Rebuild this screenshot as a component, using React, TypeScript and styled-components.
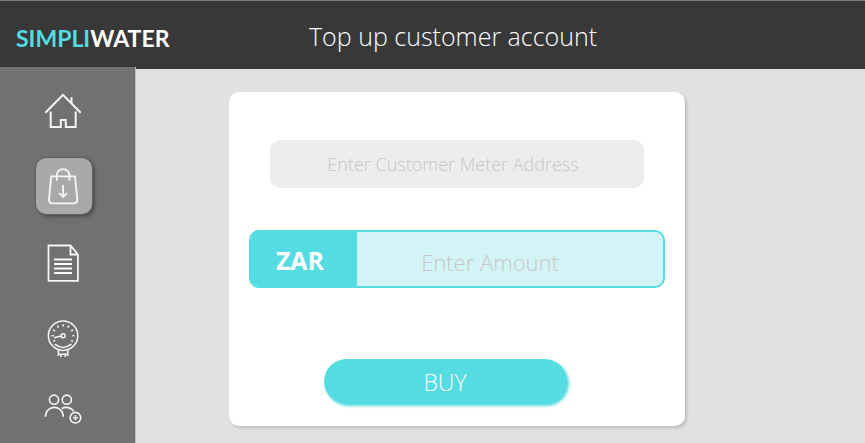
import React from "react";
import styled, { createGlobalStyle } from "styled-components";

const aqua = "#55dbe2";

const GlobalStyle = createGlobalStyle`
  *, *::before, *::after { box-sizing: border-box; }
  body {
    margin: 0;
    background: #e1e1e1;
    font-family: "Open Sans", "Noto Sans", sans-serif;
  }
`;

const Page = styled.div`
  display: flex;
  flex-direction: column;
  min-height: 100vh;
`;

const Header = styled.header`
  display: grid;
  grid-template-columns: 293px 1fr;
  align-items: center;
  height: 69px;
  padding: 2px 16px 0;
  border-top: 1px solid #7d8080;
  background: #383838;
  color: #fff;
`;

const Brand = styled.a`
  padding-top: 4px;
  color: #fff;
  font: 700 23px/32px Lato, sans-serif;
  text-decoration: none;

  span { color: ${aqua}; }
`;

const Title = styled.h1`
  margin: 0;
  font-size: 25px;
  line-height: 36px;
  font-weight: 300;
  white-space: nowrap;
`;

const Body = styled.div`
  display: flex;
  flex: 1;
`;

const Sidebar = styled.nav`
  display: flex;
  flex-direction: column;
  flex: none;
  gap: 19px;
  width: 136px;
  margin-top: -2px;
  padding: 16px 0 4px 36px;
  border-right: 1px solid #bdbdbd;
  background: #717171;
`;

const NavLink = styled.a<{ $active?: boolean }>`
  display: block;
  width: 56px;
  height: 56px;
  border-radius: 10px;
  color: #f6f6f6;
  background: ${(p) => (p.$active ? "#a9a9a9" : "transparent")};
  box-shadow: ${(p) => (p.$active ? "0 0 0 1px #5f5f5f, 2px 2px 4px rgba(0, 0, 0, 0.45)" : "none")};
`;

const Icon = styled.svg`
  display: block;
  fill: none;
  stroke: currentColor;
  stroke-width: 2;
`;

const Main = styled.main`
  flex: 1;
  padding: 23px 93px 16px;
`;

const Card = styled.form`
  display: flex;
  flex-direction: column;
  align-items: center;
  max-width: 456px;
  padding: 48px 20px 22px;
  border-radius: 10px;
  background: #fff;
  box-shadow: 2px 2px 3px rgba(0, 0, 0, 0.16);
`;

const TextInput = styled.input`
  min-width: 0;
  border: 0;
  font: 300 22px "Open Sans", sans-serif;
  text-align: center;
  color: #555;

  &::placeholder { color: #c6c6c6; opacity: 1; }
`;

const MeterInput = styled(TextInput)`
  width: 90%;
  height: 48px;
  padding: 0 8px 0 0;
  border-radius: 10px;
  background: #ededed;
  font-size: 18px;
`;

const AmountField = styled.div`
  display: flex;
  width: 100%;
  height: 58px;
  margin: 42px 0 71px;
  border: 2px solid ${aqua};
  border-radius: 10px;
  background: #d3f4f7;
  overflow: hidden;
`;

const Currency = styled.label`
  flex: none;
  width: 106px;
  padding-right: 8px;
  background: ${aqua};
  color: #fff;
  font-size: 25px;
  font-weight: 700;
  line-height: 56px;
  text-align: center;
`;

const AmountInput = styled(TextInput)`
  flex: 1;
  padding: 6px 40px 0 0;
  background: transparent;
`;

const BuyButton = styled.button`
  width: 243px;
  height: 45px;
  margin-right: 24px;
  padding: 0;
  border: 0;
  border-radius: 23px;
  background: ${aqua};
  box-shadow: 2px 2px 3px ${aqua};
  color: #fff;
  font: 300 23px/44px "Open Sans", sans-serif;
  cursor: pointer;
`;

const NavIcon = ({ children }: { children: React.ReactNode }) => (
  <Icon width="56" height="56" viewBox="0 0 56 56" aria-hidden="true">
    {children}
  </Icon>
);

const HomeIcon = () => (
  <NavIcon>
    <path d="M9.4 29.7 27 11.8 44.7 29.7M35.5 20V14.2M14.7 28.5V44H24.8V37H29.8V44H39.7V28.5" />
  </NavIcon>
);

const BagIcon = () => (
  <NavIcon>
    <path strokeWidth="1.8" d="M15.2 18.4H39L41.3 41.5Q41.4 45.3 37.8 45.3H16.5Q12.9 45.3 13 41.5ZM20.8 22.8V17.4A6.3 6.3 0 0 1 33.4 17.4V22.8M27.1 27V38.7M23.2 35.2 27.1 38.9 31 35.2" />
  </NavIcon>
);

const DocumentIcon = () => (
  <NavIcon>
    <path strokeWidth="1.8" d="M12.5 12.5H34.5L41.9 21.5V47.8H12.5ZM34.5 12.5V21.5H41.9M18 26.5H36M18 31H36M18 35.5H36M18 40H36" />
  </NavIcon>
);

const tickAngles = [-120, -90, -60, -30, 0, 30, 60, 90, 120];

const MeterIcon = () => (
  <NavIcon>
    <g strokeWidth="1.5">
      <circle cx="27.1" cy="27.7" r="14.7" />
      <circle cx="27.1" cy="27.7" r="2" />
      <path d="M25 28.1 18 29.7M18.8 36.2Q27.1 42.6 35.4 36.2M22.4 42V46.3H31.8V42M25 46.3V49M29.2 46.3V49M22.4 46.3V48M31.8 46.3V48" />
      {tickAngles.map((angle) => (
        <path key={angle} d="M27.1 16.2V18.4" transform={`rotate(${angle} 27.1 27.7)`} />
      ))}
    </g>
  </NavIcon>
);

const AddUsersIcon = () => (
  <NavIcon>
    <g strokeWidth="1.6">
      <circle cx="18" cy="16.7" r="4.6" />
      <circle cx="30.8" cy="16.7" r="4.6" />
      <path d="M9.5 33.8C9.5 21.2 27.2 21.2 27.2 33.8M25.8 25.5Q32.5 22.4 37.8 28.2" />
      <circle cx="39.4" cy="34.7" r="5.3" />
      <path d="M36.9 34.7H41.9M39.4 32.2V37.2" />
    </g>
  </NavIcon>
);

const navItems = [
  { label: "Home", href: "#home", Glyph: HomeIcon },
  { label: "Top up", href: "#top-up", Glyph: BagIcon, active: true },
  { label: "Reports", href: "#reports", Glyph: DocumentIcon },
  { label: "Meters", href: "#meters", Glyph: MeterIcon },
  { label: "Add customers", href: "#customers", Glyph: AddUsersIcon },
];

export default function App() {
  return (
    <Page>
      <GlobalStyle />
      <Header>
        <Brand href="#home"><span>SIMPLI</span>WATER</Brand>
        <Title>Top up customer account</Title>
      </Header>
      <Body>
        <Sidebar aria-label="Main">
          {navItems.map(({ label, href, Glyph, active }) => (
            <NavLink key={label} href={href} aria-label={label} $active={active} aria-current={active ? "page" : undefined}>
              <Glyph />
            </NavLink>
          ))}
        </Sidebar>
        <Main>
          <Card onSubmit={(event) => event.preventDefault()}>
            <MeterInput aria-label="Customer meter address" placeholder="Enter Customer Meter Address" />
            <AmountField>
              <Currency htmlFor="amount">ZAR</Currency>
              <AmountInput id="amount" inputMode="decimal" placeholder="Enter Amount" />
            </AmountField>
            <BuyButton type="submit">BUY</BuyButton>
          </Card>
        </Main>
      </Body>
    </Page>
  );
}
